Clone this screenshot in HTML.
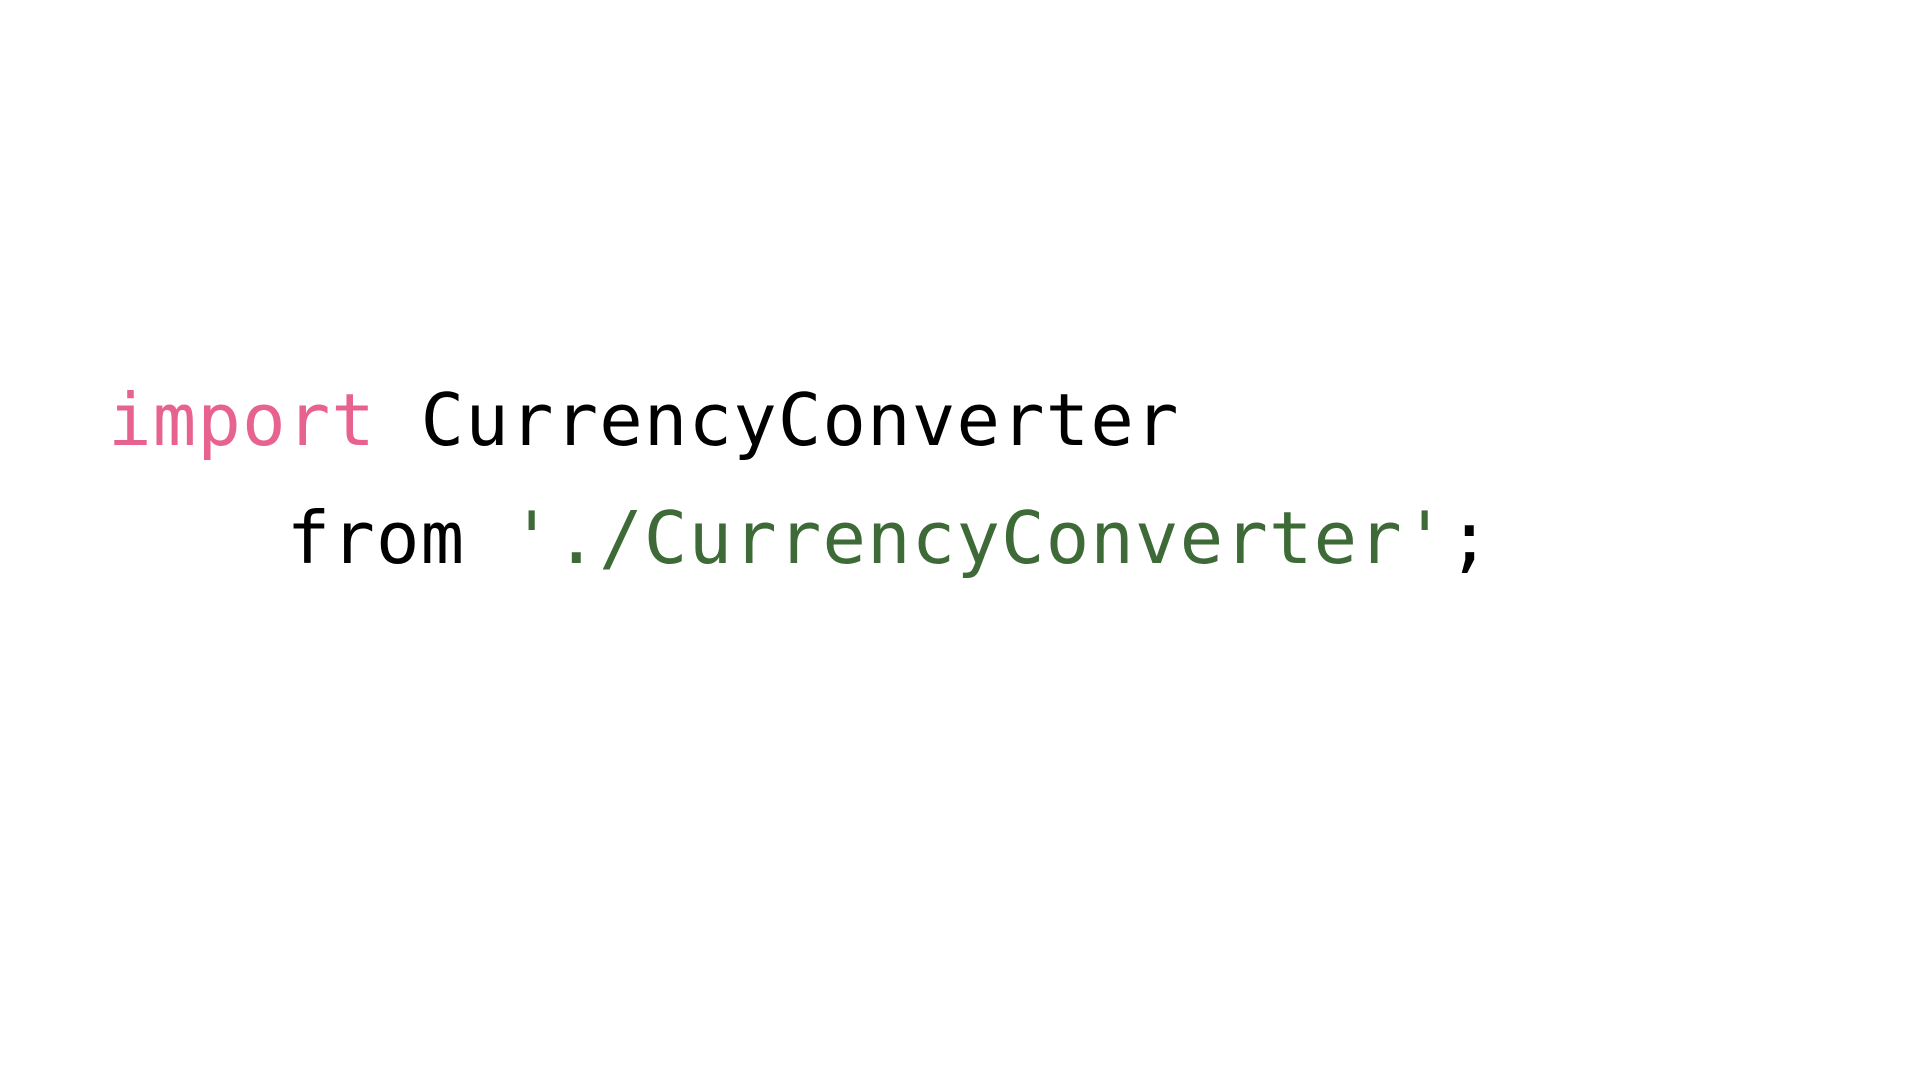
<!DOCTYPE html>
<html><head><meta charset="utf-8"><style>
html,body{margin:0;padding:0;background:#fff;width:1920px;height:1076px;overflow:hidden}
.l{position:absolute;left:108px;font-family:"DejaVu Sans Mono","Liberation Mono",monospace;font-size:72.5px;letter-spacing:1.0px;line-height:1;color:#000;white-space:pre}
.k{color:#e8628f}.s{color:#3d6a37}
</style></head><body>
<div class="l" style="top:385px"><span class="k">import</span> CurrencyConverter</div>
<div class="l" style="top:503px">    from <span class="s">'./CurrencyConverter'</span>;</div>
</body></html>
